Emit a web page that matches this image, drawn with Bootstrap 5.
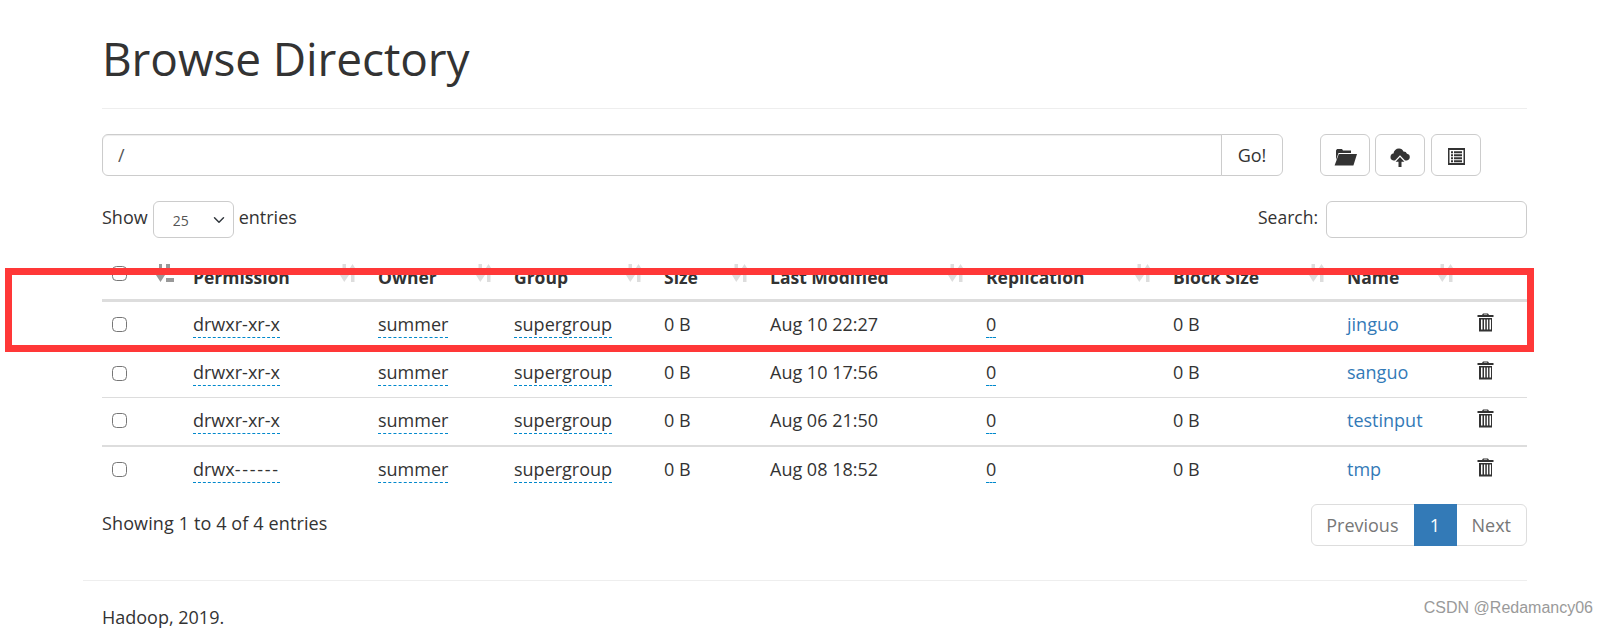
<!DOCTYPE html>
<html lang="en">
<head>
<meta charset="utf-8">
<title>Browse Directory</title>
<link rel="stylesheet" href="https://cdn.jsdelivr.net/npm/bootstrap@5.3.0/dist/css/bootstrap.min.css">
<style>
html,body{height:628px;overflow:hidden}
body{font-family:"Open Sans","Noto Sans",sans-serif;font-size:18px;color:#333;background:#fff;position:relative}
.page-wrap{padding:0 81px 0 102px}
.page-title{font-size:46px;font-weight:400;line-height:56px;margin:0;padding:30px 0 22px;border-bottom:1px solid #eee;letter-spacing:-.1px}
.path-row{margin-top:25px;height:42px}
.path-group{width:1181px}
.path-input{height:42px;font-size:18px;color:#555;padding-left:15px;border-color:#ccc;box-shadow:inset 0 1px 1px rgba(0,0,0,.075)}
.go-btn{height:42px;width:62px;font-size:18px;color:#333;border-color:#ccc;padding:0}
.tool-btn{width:50px;height:42px;padding:0;border-color:#ccc;color:#333}
.tool-btn:last-child{margin-left:1px}
.tools{margin-left:37px;gap:5px}
.filter-row{margin-top:25px;height:37px;width:1425px}
.show-select{width:81px;height:37px;margin:0 5px;font-size:14px;color:#555;padding:4px 8px 2px 19px;background-position:right 6px center;border-color:#ccc}
.search-box{width:201px;height:37px;border-color:#ccc}
.lift{margin:-5px 0 0}
.search-label{font-size:17.500px}
.dt{table-layout:fixed;width:1425px;margin:25px 0 0;font-size:18px;border-collapse:collapse;color:#333}
.dt th{font-size:17.5px;font-weight:700;padding:4px 8px 12px;height:36px;line-height:20px;border-bottom:3px solid #ddd;white-space:nowrap;position:relative}
.dt th:first-child{vertical-align:top;padding-top:3px}
.dt td{padding:0 8px 2px;height:48px;border-top:1px solid #ddd;border-bottom:0;vertical-align:middle;white-space:nowrap;box-shadow:none}
.dt tbody tr:first-child td{border-top:0;height:49px;padding-bottom:3px}
.dt tbody tr:last-child td{border-top:2px solid #ddd}
.tick{width:15px;height:15px;margin:0 0 2px 2px;border:1px solid #767676;border-radius:3px;vertical-align:middle}
.head-tick{display:block;margin:0 0 0 2px}
.under{border-bottom:1px dashed #08c;color:#333;padding-bottom:1px}
.wide-dash{letter-spacing:1.7px}
.file-link{color:#337ab7;text-decoration:none}
.sort-mark{position:absolute;right:13px;top:1px;width:17px;height:18px}
.sort-main{position:absolute;left:54px;top:1px;width:18px;height:18px}
.trash{display:block;margin:-5px 0 0 1px}
.foot-row{margin-top:10px;height:42px;width:1425px}
.pager-box .page-link{font-size:18px;height:42px;line-height:24px;padding:8px 15px;color:#777;border-color:#ddd;background:#fff}
.pager-box .page-item:first-child .page-link{padding-left:14px}
.pager-box .active .page-link{background:#337ab7;border-color:#337ab7;color:#fff;width:43px;padding:8px 0;text-align:center}
.info-text{margin-top:-2px;letter-spacing:.12px}
.site-foot{margin:34px 0 0 -19px;border-top:1px solid #eee;padding:24px 19px 0;line-height:24px;font-size:18px}
.red-frame{position:absolute;left:5px;top:268px;width:1529px;height:84px;border:7px solid #ff3838;pointer-events:none}
.mark-text{position:absolute;right:15px;top:596px;font-size:16px;color:#9a9a9a;font-family:"Liberation Sans",sans-serif}
</style>
</head>
<body>
<div class="page-wrap">
  <h1 class="page-title">Browse Directory</h1>
  <div class="path-row d-flex">
    <div class="input-group path-group">
      <input class="form-control path-input" type="text" value="/">
      <button class="btn btn-outline-secondary bg-white go-btn" type="button">Go!</button>
    </div>
    <div class="d-flex tools">
      <button class="btn bg-white tool-btn" type="button" aria-label="Create directory">
        <svg width="24" height="18" viewBox="0 0 24 18"><path d="M3 4V2.500L4 1h5l1 1.500H18V5H5.500L3 12z" fill="#333"/><path d="M5.800 6H24l-3.600 11.500H1.600z" fill="#333"/></svg>
      </button>
      <button class="btn bg-white tool-btn" type="button" aria-label="Upload">
        <svg width="20" height="20" viewBox="0 0 20 20"><path d="M5 13.500H3.500A3.400 3.400 0 0 1 .5 9.800a3.500 3.500 0 0 1 3-3.300A5.400 5.400 0 0 1 9 1.500a4.600 4.600 0 0 1 4.400 3A3.600 3.600 0 0 1 17 6.800a3.400 3.400 0 0 1 2.800 3.300 3.400 3.400 0 0 1-3 3.400H15L10 8.200z" fill="#333"/><path d="M10 10l4.400 4.700h-2.900V20h-3v-5.300H5.600z" fill="#333"/></svg>
      </button>
      <button class="btn bg-white tool-btn" type="button" aria-label="Concatenate">
        <svg width="17" height="17" viewBox="0 0 17 17"><path fill-rule="evenodd" d="M0 0h17v17H0zM1.500 2v13h14V2zM3 3.200h2v2H3zM6 3.200h8v2H6zM3 6.200h2v2H3zM6 6.200h8v2H6zM3 9.200h2v2H3zM6 9.200h8v2H6zM3 12.200h2v2H3zM6 12.200h8v2H6z" fill="#333"/></svg>
      </button>
    </div>
  </div>

  <div class="filter-row d-flex justify-content-between align-items-center">
    <div class="d-flex align-items-center">
      <label for="pg" class="lift">Show</label>
      <select id="pg" class="form-select show-select"><option>25</option></select>
      <span class="lift">entries</span>
    </div>
    <div class="d-flex align-items-center gap-2">
      <label for="sr" class="lift search-label">Search:</label>
      <input id="sr" class="form-control search-box" type="search">
    </div>
  </div>

  <table class="table dt">
    <colgroup><col style="width:83px"><col style="width:185px"><col style="width:136px"><col style="width:150px"><col style="width:106px"><col style="width:216px"><col style="width:187px"><col style="width:174px"><col style="width:129px"><col style="width:59px"></colgroup>
    <thead>
      <tr>
        <th><input type="checkbox" class="form-check-input tick head-tick"><svg class="sort-main" viewBox="0 0 18 18"><path d="M3 0h3v11h3l-4.500 7L0 11h3zM10 0h4v4h-4zM10 7h6v4h-6zM10 14h8v4h-8z" fill="#999"/></svg></th>
        <th>Permission<svg class="sort-mark"><use href="#srt"/></svg></th>
        <th>Owner<svg class="sort-mark"><use href="#srt"/></svg></th>
        <th>Group<svg class="sort-mark"><use href="#srt"/></svg></th>
        <th>Size<svg class="sort-mark"><use href="#srt"/></svg></th>
        <th>Last Modified<svg class="sort-mark"><use href="#srt"/></svg></th>
        <th>Replication<svg class="sort-mark"><use href="#srt"/></svg></th>
        <th>Block Size<svg class="sort-mark"><use href="#srt"/></svg></th>
        <th>Name<svg class="sort-mark"><use href="#srt"/></svg></th>
        <th></th>
      </tr>
    </thead>
    <tbody>
      <tr><td><input type="checkbox" class="form-check-input tick"></td><td><span class="under">drwxr-xr-x</span></td><td><span class="under">summer</span></td><td><span class="under">supergroup</span></td><td>0 B</td><td>Aug 10 22:27</td><td><span class="under">0</span></td><td>0 B</td><td><a class="file-link" href="#">jinguo</a></td><td><svg class="trash" width="17" height="20"><use href="#trs"/></svg></td></tr>
      <tr><td><input type="checkbox" class="form-check-input tick"></td><td><span class="under">drwxr-xr-x</span></td><td><span class="under">summer</span></td><td><span class="under">supergroup</span></td><td>0 B</td><td>Aug 10 17:56</td><td><span class="under">0</span></td><td>0 B</td><td><a class="file-link" href="#">sanguo</a></td><td><svg class="trash" width="17" height="20"><use href="#trs"/></svg></td></tr>
      <tr><td><input type="checkbox" class="form-check-input tick"></td><td><span class="under">drwxr-xr-x</span></td><td><span class="under">summer</span></td><td><span class="under">supergroup</span></td><td>0 B</td><td>Aug 06 21:50</td><td><span class="under">0</span></td><td>0 B</td><td><a class="file-link" href="#">testinput</a></td><td><svg class="trash" width="17" height="20"><use href="#trs"/></svg></td></tr>
      <tr><td><input type="checkbox" class="form-check-input tick"></td><td><span class="under">drwx<span class="wide-dash">------</span></span></td><td><span class="under">summer</span></td><td><span class="under">supergroup</span></td><td>0 B</td><td>Aug 08 18:52</td><td><span class="under">0</span></td><td>0 B</td><td><a class="file-link" href="#">tmp</a></td><td><svg class="trash" width="17" height="20"><use href="#trs"/></svg></td></tr>
    </tbody>
  </table>

  <div class="foot-row d-flex justify-content-between align-items-center">
    <div class="info-text">Showing 1 to 4 of 4 entries</div>
    <nav class="pager-box" aria-label="Pages">
      <ul class="pagination mb-0">
        <li class="page-item disabled"><a class="page-link" href="#">Previous</a></li>
        <li class="page-item active"><a class="page-link" href="#">1</a></li>
        <li class="page-item disabled"><a class="page-link" href="#">Next</a></li>
      </ul>
    </nav>
  </div>
  <div class="site-foot">Hadoop, 2019.</div>
</div>

<div class="red-frame"></div>
<div class="mark-text">CSDN @Redamancy06</div>

<svg width="0" height="0" class="d-none" aria-hidden="true">
  <defs>
    <g id="srt" fill="#ddd"><path d="M2.500 0h3.500v11h3l-4.750 7L0 11h2.500z"/><path d="M11 18h3.500V7h2.500l-4.500-7L8 7h3z"/></g>
    <g id="trs" fill="#333"><path d="M6 1.500h5L12 3h4.500v2H.5V3H5zM7 2.500 6.600 3h3.800l-.4-.5z" fill-rule="evenodd"/><path fill-rule="evenodd" d="M2 6h13v13.500H2zM4 7.500v10h1.500v-10zM7 7.500v10h1.300v-10zM9.800 7.500v10h1.300v-10zM12.500 7.500v10H14v-10z"/></g>
  </defs>
</svg>
<script src="https://cdn.jsdelivr.net/npm/bootstrap@5.3.0/dist/js/bootstrap.bundle.min.js"></script>
</body>
</html>
